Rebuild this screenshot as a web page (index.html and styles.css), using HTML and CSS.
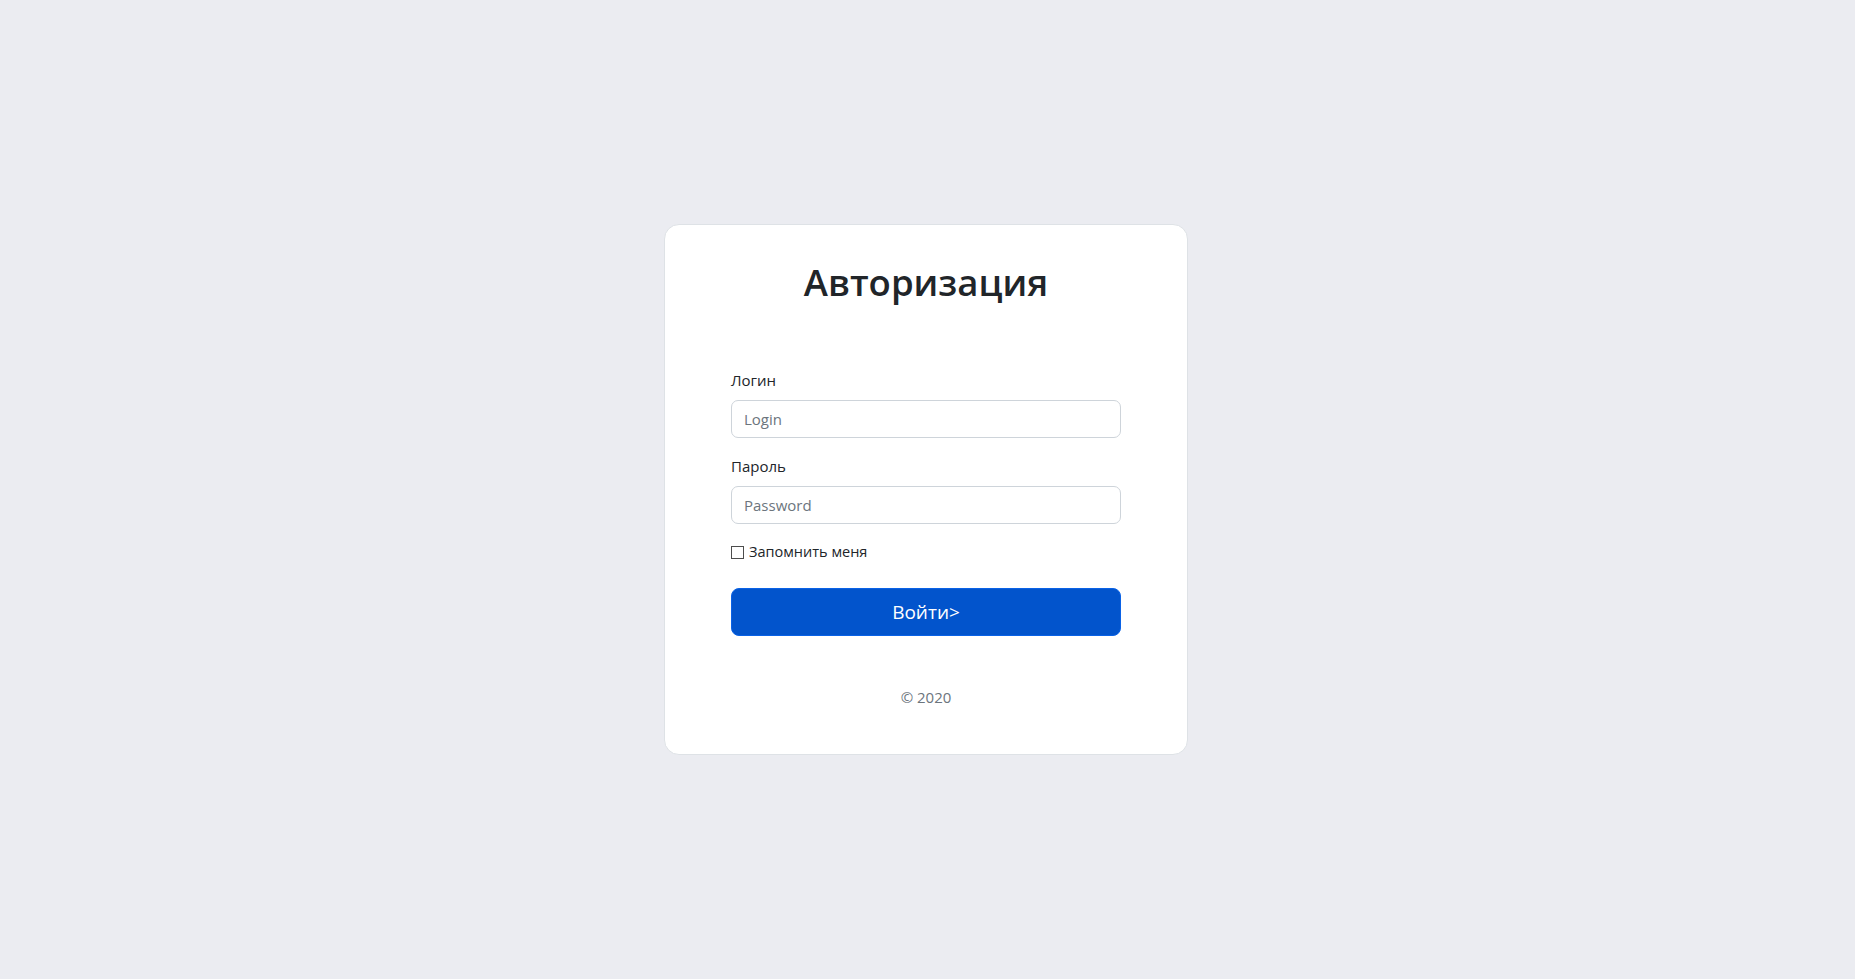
FILE: index.html
```html
<!DOCTYPE html>
<html lang="ru">
<head>
<meta charset="utf-8">
<title>Авторизация</title>
<link rel="stylesheet" href="styles.css">
</head>
<body>
<main class="page">
  <section class="card">
    <h1 class="title">Авторизация</h1>
    <form class="form">
      <div class="field">
        <label class="label" for="login">Логин</label>
        <input class="control" id="login" type="text" placeholder="Login">
      </div>
      <div class="field">
        <label class="label" for="password">Пароль</label>
        <input class="control" id="password" type="password" placeholder="Password">
      </div>
      <label class="check">
        <input class="check-box" type="checkbox">
        <span>Запомнить меня</span>
      </label>
      <button class="btn" type="button">Войти&gt;</button>
    </form>
    <p class="copy">© 2020</p>
  </section>
</main>
</body>
</html>
```

FILE: styles.css
```css
* { box-sizing: border-box; }

html, body {
  margin: 0;
  padding: 0;
}

body {
  background: #ebecf1;
  font-family: "Open Sans", "Noto Sans", sans-serif;
  color: #212529;
  font-size: 16px;
  line-height: 1.5;
}

.page {
  min-height: 100vh;
  display: flex;
  align-items: center;
  justify-content: center;
  padding-right: 3px;
}

.card {
  width: 524px;
  background: #fff;
  border: 1px solid #dee2e6;
  border-radius: 15px;
  padding: 36px 66px 45px;
}

.title {
  margin: 0 0 64px;
  text-align: center;
  font-size: 36.5px;
  font-weight: 600;
  line-height: 43px;
  color: #212529;
}

.form {
  display: flex;
  flex-direction: column;
}

.field {
  display: flex;
  flex-direction: column;
  margin-bottom: 16px;
}

.label {
  font-size: 15px;
  line-height: 24px;
  margin-bottom: 8px;
}

.control {
  height: 38px;
  border: 1px solid #ced4da;
  border-radius: 7px;
  padding: 0 12px;
  font-family: inherit;
  font-size: 15px;
  color: #212529;
  background: #fff;
}

.control::placeholder {
  color: #6c757d;
}

.check {
  display: flex;
  align-items: center;
  font-size: 14.5px;
  line-height: 24px;
  height: 24px;
}

.check-box {
  appearance: none;
  -webkit-appearance: none;
  margin: 0 5px 0 0;
  width: 13px;
  height: 13px;
  border: 1px solid #4d4d4d;
  border-radius: 0;
  background: #fff;
}

.btn {
  margin-top: 24px;
  height: 48px;
  border: 1px solid #0a62e6;
  border-radius: 8px;
  background: #0254cc;
  color: #fff;
  font-family: inherit;
  font-size: 19px;
  line-height: 1;
}

.copy {
  margin: 49px 0 0;
  text-align: center;
  color: #6c757d;
  font-size: 15px;
  line-height: 24px;
}
```
